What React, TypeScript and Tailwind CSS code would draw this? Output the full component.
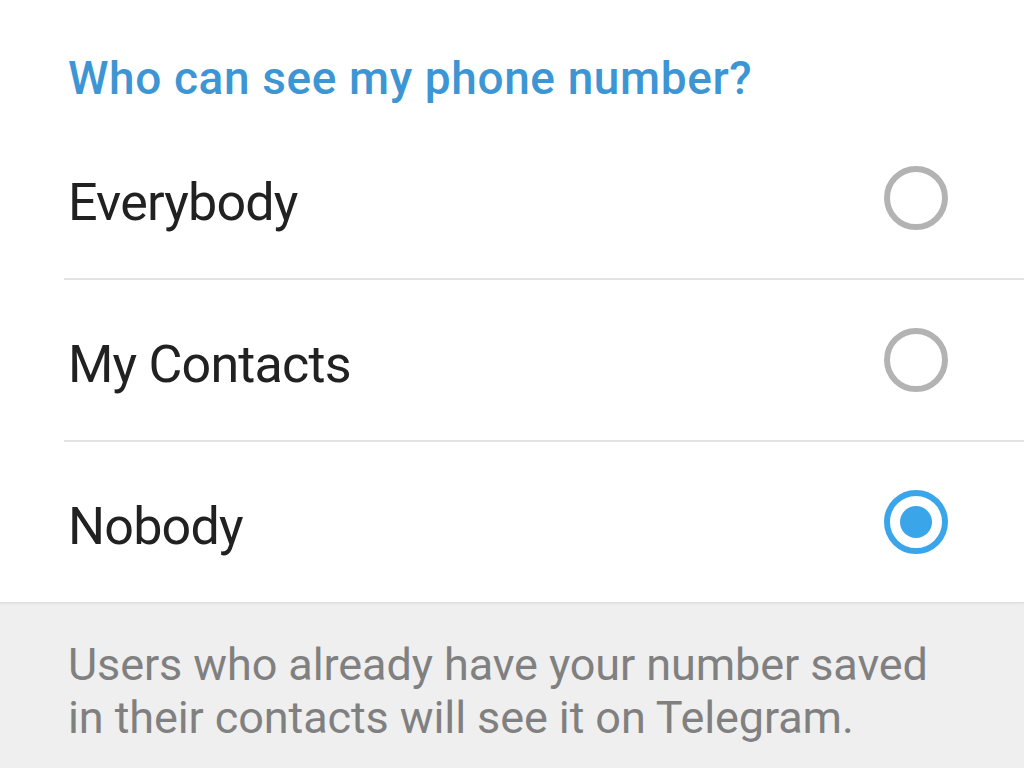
const options = [
  { label: 'Everybody', checked: false },
  { label: 'My Contacts', checked: false },
  { label: 'Nobody', checked: true },
];

const Radio = ({ checked }: { checked: boolean }) => (
  <div
    className={`flex h-[64px] w-[64px] items-center justify-center rounded-full border-[6px] ${
      checked ? 'border-[#3ba5ea]' : 'border-[#b3b3b3]'
    }`}
  >
    {checked && <div className="h-[32px] w-[32px] rounded-full bg-[#3ba5ea]" />}
  </div>
);

export default function App() {
  return (
    <div className="flex h-[768px] w-[1024px] flex-col overflow-hidden bg-[#efefef] font-['Roboto',sans-serif]">
      <div className="bg-white">
        <div className="h-[118px] pl-[68px] pt-[51px]">
          <h2 className="text-[46px] font-medium leading-[54px] tracking-[0.6px] text-[#3d96d3]">
            Who can see my phone number?
          </h2>
        </div>
        {options.map((o, i) => (
          <div key={o.label}>
            <div className="flex h-[160px] items-center justify-between pl-[68px] pr-[76px]">
              <span className="mt-[8px] text-[52px] leading-[61px] tracking-[-0.8px] text-[#212121]">
                {o.label}
              </span>
              <Radio checked={o.checked} />
            </div>
            {i < options.length - 1 && <div className="ml-[64px] h-[2px] bg-[#e3e3e3]" />}
          </div>
        ))}
      </div>
      <div className="h-[3px] bg-gradient-to-b from-[#dcdcdc] to-[#efefef]" />
      <p className="pl-[68px] pt-[33px] text-[45px] leading-[53px] tracking-[-0.1px] text-[#808080]">
        Users who already have your number saved
        <br />
        in their contacts will see it on Telegram.
      </p>
    </div>
  );
}
